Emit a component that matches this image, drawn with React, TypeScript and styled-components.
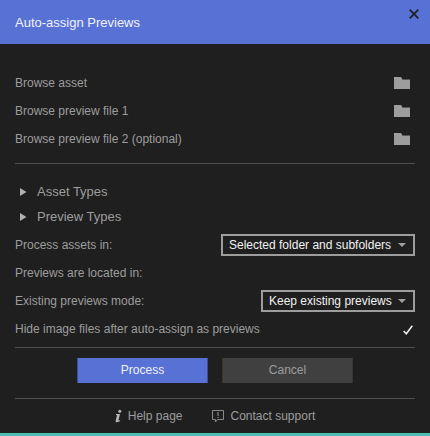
import React, { useId, useState } from "react";
import styled, { createGlobalStyle } from "styled-components";

const GlobalStyle = createGlobalStyle`
  *, *::before, *::after { box-sizing: border-box; }
  body {
    margin: 0;
    background: #1f1f1f;
    color: #9d9d9d;
    font-family: "Liberation Sans", Arial, sans-serif;
    font-size: 12px;
    line-height: 16px;
  }
  button, select { font: inherit; color: inherit; }
`;

const Dialog = styled.main`
  display: flex;
  flex-direction: column;
  min-height: 100vh;
  border-bottom: 3px solid #4cc0b0;
`;

const Header = styled.header`
  display: flex;
  align-items: flex-start;
  justify-content: space-between;
  height: 44px;
  padding: 0 10px 0 15px;
  background: #5871d5;
`;

const Title = styled.h1`
  margin: 0;
  color: #f0f2fb;
  font-size: 13px;
  font-weight: 400;
  line-height: 46px;
`;

const IconButton = styled.button`
  display: flex;
  padding: 0;
  border: 0;
  background: none;
  cursor: pointer;
`;

const CloseButton = styled(IconButton)`
  margin-top: 8px;
  padding: 1px;
  color: #1f1f1f;
`;

const Body = styled.div`
  padding: 25px 15px 0;
`;

const Row = styled.div`
  display: flex;
  align-items: center;
  justify-content: space-between;
  height: 28px;
`;

const BrowseButton = styled(IconButton)`
  margin-right: 5px;
`;

const Divider = styled.hr<{ $top: number; $bottom: number }>`
  height: 1px;
  margin: ${(p) => p.$top}px 0 ${(p) => p.$bottom}px;
  border: 0;
  background: #505050;
`;

const Expander = styled.button`
  display: flex;
  align-items: center;
  gap: 10px;
  width: 100%;
  height: 25px;
  padding: 0 0 0 5px;
  border: 0;
  background: none;
  font-size: 13px;
  text-align: left;
  cursor: pointer;
`;

const Options = styled.div`
  padding-top: 2px;
`;

const SelectBox = styled.span`
  display: grid;
  align-items: center;
  & > * { grid-area: 1 / 1; }
  & > svg {
    justify-self: end;
    margin-right: 9px;
    pointer-events: none;
  }
`;

const Select = styled.select`
  appearance: none;
  height: 22px;
  padding: 0 21px 0 6px;
  border: 2px solid #9d9d9d;
  border-radius: 0;
  background: #1f1f1f;
  color: #f2f2f2;
`;

const CheckMark = styled.span`
  display: grid;
  margin: 2px 2px 0 0;
  & > * { grid-area: 1 / 1; }
  & > svg { pointer-events: none; visibility: hidden; }
  & > input:checked + svg { visibility: visible; }
`;

const Checkbox = styled.input`
  appearance: none;
  width: 10px;
  height: 10px;
  margin: 0;
`;

const Actions = styled.div`
  display: flex;
  justify-content: center;
  gap: 14px;
`;

const ActionButton = styled.button<{ $primary?: boolean }>`
  flex: 0 1 131px;
  height: 25px;
  padding: 0 0 2px;
  border: 1px solid ${(p) => (p.$primary ? "#3f4f93" : "#353535")};
  border-width: 0 1px;
  background: ${(p) => (p.$primary ? "#5871d5" : "#404040")};
  color: ${(p) => (p.$primary ? "#f0f2fb" : "#9d9d9d")};
`;

const Footer = styled.footer`
  display: flex;
  justify-content: center;
  gap: 29px;
`;

const FooterLink = styled.a`
  display: flex;
  align-items: center;
  gap: 6px;
  color: inherit;
  text-decoration: none;
`;

const FolderIcon = () => (
  <svg width="16" height="12" viewBox="0 0 16 12" aria-hidden="true">
    <path d="M0 0h7l2 3h7v9H0z" fill="#9d9d9d" />
    <path d="M8 2h8v1H9z" fill="#555" />
  </svg>
);

const CloseIcon = () => (
  <svg width="10" height="10" viewBox="0 0 10 10" aria-hidden="true">
    <path d="M.7.7l8.6 8.6M9.3.7L.7 9.3" stroke="currentColor" strokeWidth="1.7" />
  </svg>
);

const TriangleIcon = () => (
  <svg width="7" height="8" viewBox="0 0 7 8" aria-hidden="true">
    <path d="M0 0l6.500 4L0 8z" fill="#b0b0b0" />
  </svg>
);

const ArrowIcon = () => (
  <svg width="8" height="4" viewBox="0 0 8 4" aria-hidden="true">
    <path d="M0 0h8L4 4z" fill="#9d9d9d" />
  </svg>
);

const CheckIcon = () => (
  <svg width="10" height="10" viewBox="0 0 10 10" aria-hidden="true">
    <path d="M.7 6l2.600 2.800L9.300.7" fill="none" stroke="#f2f2f2" strokeWidth="1.500" />
  </svg>
);

const InfoIcon = () => (
  <svg width="7" height="14" viewBox="0 0 7 14" aria-hidden="true">
    <path
      d="M1 5h4L3.500 11.200c0 .5.500.400 1.600-.2v1C4 12.700 3.300 13.200 2 13.200c-1.200 0-1.500-.8-1.300-1.800L2 6.200 1 6z"
      fill="#b4b4b4"
    />
    <circle cx="4.800" cy="2.200" r="1.500" fill="#b4b4b4" />
  </svg>
);

const SupportIcon = () => (
  <svg width="13" height="13" viewBox="0 0 13 13" aria-hidden="true">
    <path d="M.5.5h11v9H5.500L3.500 12V9.500h-3z" fill="none" stroke="#8a8a8a" />
    <path d="M6 2v4M6 7v1" stroke="#9d9d9d" />
  </svg>
);

function BrowseRow({ label }: { label: string }) {
  return (
    <Row>
      <span>{label}</span>
      <BrowseButton type="button" aria-label={label}>
        <FolderIcon />
      </BrowseButton>
    </Row>
  );
}

function ExpanderRow({ label }: { label: string }) {
  return (
    <Expander type="button" aria-expanded={false}>
      <TriangleIcon />
      {label}
    </Expander>
  );
}

function SelectRow({ label, value }: { label: string; value: string }) {
  const id = useId();
  return (
    <Row>
      <label htmlFor={id}>{label}</label>
      <SelectBox>
        <Select id={id}>
          <option>{value}</option>
        </Select>
        <ArrowIcon />
      </SelectBox>
    </Row>
  );
}

export default function App() {
  const [hideFiles, setHideFiles] = useState(true);
  return (
    <>
      <GlobalStyle />
      <Dialog>
        <Header>
          <Title>Auto-assign Previews</Title>
          <CloseButton type="button" aria-label="Close">
            <CloseIcon />
          </CloseButton>
        </Header>
        <Body>
          <BrowseRow label="Browse asset" />
          <BrowseRow label="Browse preview file 1" />
          <BrowseRow label="Browse preview file 2 (optional)" />
          <Divider $top={10} $bottom={15} />
          <ExpanderRow label="Asset Types" />
          <ExpanderRow label="Preview Types" />
          <Options>
            <SelectRow label="Process assets in:" value="Selected folder and subfolders" />
            <Row>Previews are located in:</Row>
            <SelectRow label="Existing previews mode:" value="Keep existing previews" />
            <Row>
              <label htmlFor="hide-files">Hide image files after auto-assign as previews</label>
              <CheckMark>
                <Checkbox
                  id="hide-files"
                  type="checkbox"
                  checked={hideFiles}
                  onChange={(e) => setHideFiles(e.target.checked)}
                />
                <CheckIcon />
              </CheckMark>
            </Row>
          </Options>
          <Divider $top={4} $bottom={10} />
          <Actions>
            <ActionButton type="button" $primary>Process</ActionButton>
            <ActionButton type="button">Cancel</ActionButton>
          </Actions>
          <Divider $top={15} $bottom={9} />
          <Footer>
            <FooterLink href="#help">
              <InfoIcon />
              Help page
            </FooterLink>
            <FooterLink href="#support">
              <SupportIcon />
              Contact support
            </FooterLink>
          </Footer>
        </Body>
      </Dialog>
    </>
  );
}
